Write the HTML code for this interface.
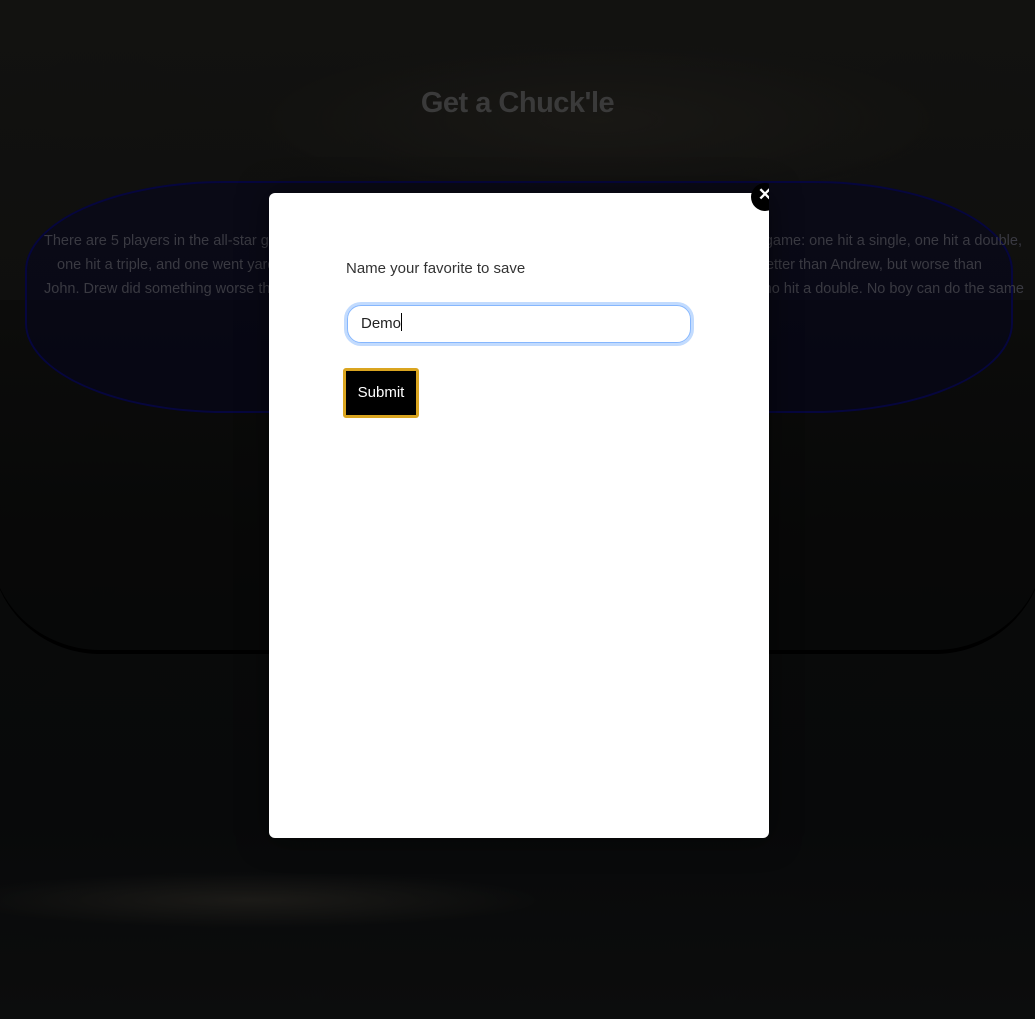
<!DOCTYPE html>
<html><head><meta charset="utf-8"><style>
html,body{margin:0;padding:0;}
body{width:1035px;height:1019px;position:relative;overflow:hidden;font-family:"Liberation Sans",sans-serif;
background:
radial-gradient(ellipse 420px 40px at 250px 900px, rgba(45,42,36,0.5), transparent 70%),
radial-gradient(ellipse 500px 120px at 600px 120px, rgba(30,28,24,0.6), transparent 70%),
linear-gradient(180deg,#121210 0%,#0f0f0e 30%,#090a0a 60%,#08090a 80%,#0c0d0d 100%);}
h1{position:absolute;top:87px;left:0;width:1035px;text-align:center;margin:0;font-size:29px;font-weight:bold;color:#3a3a3a;letter-spacing:-0.5px;}
.big{position:absolute;left:-10px;top:300px;width:1055px;height:350px;border-radius:0 0 110px 110px;border-bottom:4px solid #000;background:rgba(0,0,0,0.2);}
.card{position:absolute;left:25px;top:181px;width:988px;height:232px;border:2px solid #06063e;border-radius:200px / 90px;background:rgba(6,6,30,0.55);box-sizing:border-box;}
.line{position:absolute;height:24px;line-height:24px;color:#3a3a42;font-size:14.5px;white-space:nowrap;}
.modal{position:absolute;left:269px;top:193px;width:500px;height:645px;background:#fff;border-radius:6px;box-shadow:0 0 30px rgba(0,0,0,0.5);}
.clip{position:absolute;left:269px;top:180px;width:500px;height:40px;overflow:hidden;}
.close{position:absolute;left:482px;top:3px;width:28px;height:28px;border-radius:50%;background:#000;color:#fff;font-size:17px;font-weight:bold;line-height:24px;text-align:center;}
.label{position:absolute;left:77px;top:67px;font-size:15px;color:#333;}
.input{position:absolute;left:78px;top:112px;width:344px;height:38px;border:1px solid #86b7fe;border-radius:14px;box-shadow:0 0 0 3px #c2dbfe;box-sizing:border-box;padding-left:13px;font-size:15px;line-height:36px;color:#222;}
.caret{display:inline-block;width:1px;height:18px;background:#000;vertical-align:-3px;}
.btn{position:absolute;left:74px;top:175px;width:76px;height:50px;background:#000;border:3px solid #daa520;border-radius:3px;box-sizing:border-box;color:#fff;font-size:15px;line-height:44px;text-align:center;}
</style></head><body>
<h1>Get a Chuck'le</h1>
<div class="big"></div>
<div class="card"></div>
<div class="line" style="top:229px;left:44px">There are 5 players in the all-star game and each got a hit</div>
<div class="line" style="top:229px;right:13px">at bat in the game: one hit a single, one hit a double,</div>
<div class="line" style="top:253px;left:57px">one hit a triple, and one went yard. Chris did something</div>
<div class="line" style="top:253px;right:53px">Chris did something better than Andrew, but worse than</div>
<div class="line" style="top:277px;left:44px">John. Drew did something worse than the boy who hit</div>
<div class="line" style="top:277px;right:11px">than the boy who hit a double. No boy can do the same</div>
<div class="modal">
<div class="label">Name your favorite to save</div>
<div class="input">Demo<span class="caret"></span></div>
<div class="btn">Submit</div>
</div>
<div class="clip"><div class="close">✕</div></div>
</body></html>
